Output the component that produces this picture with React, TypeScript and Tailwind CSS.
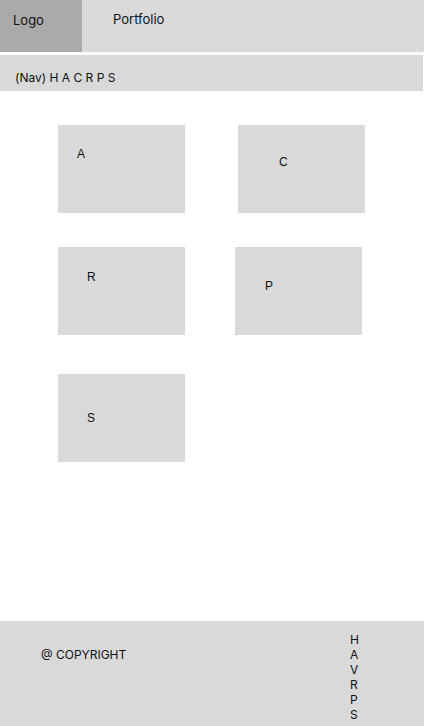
import React from "react";

const inter = { fontFamily: "Inter, 'Noto Sans', sans-serif" };

function Card({ label, className, labelClass }: { label: string; className: string; labelClass: string }) {
  return (
    <div className={`w-[127px] h-[88px] bg-[#d9d9d9] ${className}`}>
      <div className={`text-[12px] leading-[14px] text-[#111] font-['Liberation_Sans',Arial,sans-serif] ${labelClass}`}>{label}</div>
    </div>
  );
}

export default function App() {
  return (
    <div className="w-[424px] min-h-[726px] bg-white flex flex-col text-[#111]" style={inter}>
      <header className="flex h-[52px] bg-[#d9d9d9]">
        <div className="w-[82px] h-full bg-[#aaaaaa] pl-[13px] pt-[12px] text-[13px] leading-[16px]">Logo</div>
        <div className="ml-[31px] pt-[11px] text-[13px] leading-[16px]">Portfolio</div>
      </header>
      <nav className="mt-[3px] h-[36px] w-[423px] bg-[#d9d9d9] pl-[15px] pt-[15px] text-[12px] leading-[15px] whitespace-pre">
        (Nav) H A C R P S
      </nav>
      <main className="flex flex-col pl-[58px] pt-[34px]">
        <div className="flex">
          <Card label="A" className="" labelClass="pl-[19px] pt-[22px]" />
          <Card label="C" className="ml-[53px]" labelClass="pl-[41px] pt-[30px]" />
        </div>
        <div className="flex mt-[34px]">
          <Card label="R" className="" labelClass="pl-[29px] pt-[23px]" />
          <Card label="P" className="ml-[50px]" labelClass="pl-[30px] pt-[32px]" />
        </div>
        <div className="flex mt-[39px]">
          <Card label="S" className="" labelClass="pl-[29px] pt-[37px]" />
        </div>
      </main>
      <footer className="mt-[159px] h-[105px] bg-[#d9d9d9] flex text-[12px] leading-[15px]">
        <div className="pl-[41px] pt-[26px]">@ COPYRIGHT</div>
        <div className="ml-auto mr-[65px] pt-[11px] flex flex-col">
          <span>H</span>
          <span>A</span>
          <span>V</span>
          <span>R</span>
          <span>P</span>
          <span>S</span>
        </div>
      </footer>
    </div>
  );
}
